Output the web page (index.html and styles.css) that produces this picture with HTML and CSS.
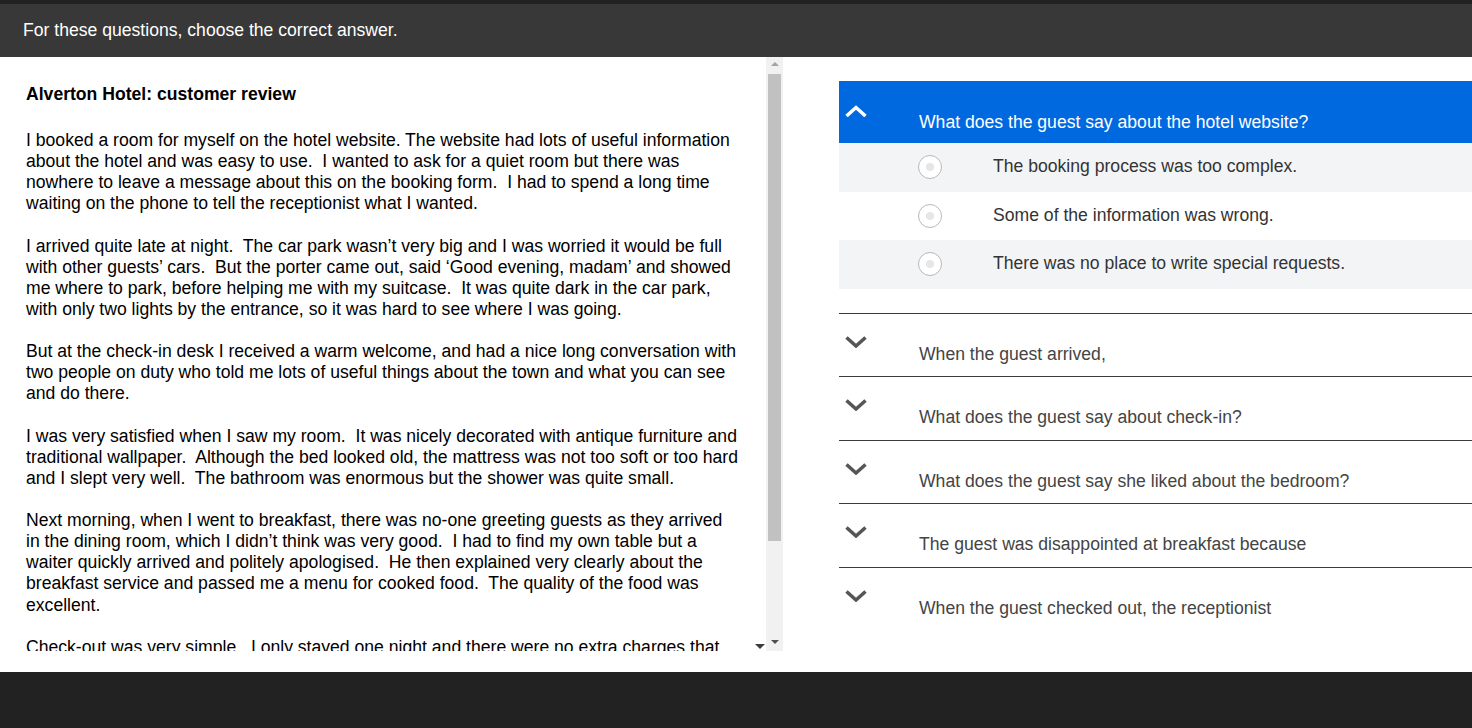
FILE: index.html
```html
<!DOCTYPE html>
<html lang="en">
<head>
    <meta charset="UTF-8">
    <meta name="viewport" content="width=device-width, initial-scale=1.0">
    <title>Reading - Alverton Hotel</title>
    <link rel="stylesheet" href="styles.css">
</head>
<body>
    <div class="topbar">For these questions, choose the correct answer.</div>

    <div class="main">
        <div class="reading">
            <div class="reading-text">
                <h1>Alverton Hotel: customer review</h1>
                <p>I booked a room for myself on the hotel website. The website had lots of useful information<br>
                about the hotel and was easy to use.&nbsp; I wanted to ask for a quiet room but there was<br>
                nowhere to leave a message about this on the booking form.&nbsp; I had to spend a long time<br>
                waiting on the phone to tell the receptionist what I wanted.</p>
                <p>I arrived quite late at night.&nbsp; The car park wasn’t very big and I was worried it would be full<br>
                with other guests’ cars.&nbsp; But the porter came out, said ‘Good evening, madam’ and showed<br>
                me where to park, before helping me with my suitcase.&nbsp; It was quite dark in the car park,<br>
                with only two lights by the entrance, so it was hard to see where I was going.</p>
                <p>But at the check-in desk I received a warm welcome, and had a nice long conversation with<br>
                two people on duty who told me lots of useful things about the town and what you can see<br>
                and do there.</p>
                <p>I was very satisfied when I saw my room.&nbsp; It was nicely decorated with antique furniture and<br>
                traditional wallpaper.&nbsp; Although the bed looked old, the mattress was not too soft or too hard<br>
                and I slept very well.&nbsp; The bathroom was enormous but the shower was quite small.</p>
                <p>Next morning, when I went to breakfast, there was no-one greeting guests as they arrived<br>
                in the dining room, which I didn’t think was very good.&nbsp; I had to find my own table but a<br>
                waiter quickly arrived and politely apologised.&nbsp; He then explained very clearly about the<br>
                breakfast service and passed me a menu for cooked food.&nbsp; The quality of the food was<br>
                excellent.</p>
                <p>Check-out was very simple.&nbsp; I only stayed one night and there were no extra charges that<br>
                I had to pay.</p>
            </div>
            <div class="scrollbar">
                <span class="arrow-up"></span>
                <span class="thumb"></span>
                <span class="arrow-down"></span>
            </div>
            <span class="more-caret"></span>
        </div>

        <div class="questions">
            <div class="question open">
                <div class="question-head">
                    <span class="chevron">
                        <svg width="22" height="12" viewBox="0 0 22 12"><polyline points="1.5,11 11,2.5 20.5,11" fill="none" stroke="#fff" stroke-width="3.5"/></svg>
                    </span>
                    <span class="question-title">What does the guest say about the hotel website?</span>
                </div>
                <label class="option"><span class="radio"></span>The booking process was too complex.</label>
                <label class="option"><span class="radio"></span>Some of the information was wrong.</label>
                <label class="option"><span class="radio"></span>There was no place to write special requests.</label>
            </div>

            <div class="question">
                <span class="chevron">
                    <svg width="22" height="12" viewBox="0 0 22 12"><polyline points="1.5,1.5 11,10 20.5,1.5" fill="none" stroke="#555" stroke-width="3.5"/></svg>
                </span>
                <span class="question-title">When the guest arrived,</span>
            </div>
            <div class="question">
                <span class="chevron">
                    <svg width="22" height="12" viewBox="0 0 22 12"><polyline points="1.5,1.5 11,10 20.5,1.5" fill="none" stroke="#555" stroke-width="3.5"/></svg>
                </span>
                <span class="question-title">What does the guest say about check-in?</span>
            </div>
            <div class="question">
                <span class="chevron">
                    <svg width="22" height="12" viewBox="0 0 22 12"><polyline points="1.5,1.5 11,10 20.5,1.5" fill="none" stroke="#555" stroke-width="3.5"/></svg>
                </span>
                <span class="question-title">What does the guest say she liked about the bedroom?</span>
            </div>
            <div class="question">
                <span class="chevron">
                    <svg width="22" height="12" viewBox="0 0 22 12"><polyline points="1.5,1.5 11,10 20.5,1.5" fill="none" stroke="#555" stroke-width="3.5"/></svg>
                </span>
                <span class="question-title">The guest was disappointed at breakfast because</span>
            </div>
            <div class="question">
                <span class="chevron">
                    <svg width="22" height="12" viewBox="0 0 22 12"><polyline points="1.5,1.5 11,10 20.5,1.5" fill="none" stroke="#555" stroke-width="3.5"/></svg>
                </span>
                <span class="question-title">When the guest checked out, the receptionist</span>
            </div>
        </div>
    </div>

    <div class="footer"></div>
</body>
</html>
```

FILE: styles.css
```css
body {
    margin: 0;
    font-family: "Liberation Sans", Arial, sans-serif;
    background-color: #fff;
    height: 728px;
    overflow: hidden;
}
.topbar {
    border-top: 4px solid #222;
    height: 53px;
    line-height: 53px;
    padding-left: 23px;
    background-color: #383838;
    color: #fff;
    font-size: 17.6px;
}
.main {
    display: flex;
    height: 615px;
}
.reading {
    position: relative;
    display: flex;
    width: 783px;
    height: 594px;
    flex-shrink: 0;
}
.reading-text {
    flex: 1;
    overflow: hidden;
    padding: 27px 0 0 26px;
    font-size: 17.6px;
    line-height: 1.2;
    color: #000;
    white-space: nowrap;
}
.reading-text h1 {
    font-size: 17.6px;
    line-height: 1.2;
    margin: 0 0 25px;
}
.reading-text p {
    margin: 0 0 1.2em;
}
.scrollbar {
    width: 17px;
    background-color: #f1f1f1;
    display: flex;
    flex-direction: column;
    align-items: center;
}
.arrow-up {
    margin-top: 5px;
    border-left: 4px solid transparent;
    border-right: 4px solid transparent;
    border-bottom: 4px solid #a3a3a3;
}
.thumb {
    width: 13px;
    height: 467px;
    margin-top: 8px;
    background-color: #c1c1c1;
}
.arrow-down {
    margin-top: auto;
    margin-bottom: 7px;
    border-left: 4px solid transparent;
    border-right: 4px solid transparent;
    border-top: 4px solid #505050;
}
.more-caret {
    position: absolute;
    left: 755px;
    bottom: 2px;
    border-left: 5px solid transparent;
    border-right: 5px solid transparent;
    border-top: 5px solid #3c3c3c;
}
.questions {
    flex: 1;
    margin: 24px 0 0 56px;
    font-size: 17.6px;
}
.question {
    display: flex;
    height: 62.5px;
    border-top: 1px solid #3a3a3a;
    color: #444;
}
.question.open {
    display: block;
    height: auto;
    border-top: none;
    margin-bottom: 24px;
}
.chevron {
    width: 80px;
    flex-shrink: 0;
    padding: 22px 0 0 6px;
    box-sizing: border-box;
}
.chevron svg {
    display: block;
}
.question-title {
    padding-top: 30px;
    line-height: 20px;
}
.question-head {
    display: flex;
    height: 62px;
    background-color: #0069e0;
    color: #fff;
}
.question-head .chevron {
    padding-top: 24px;
}
.question-head .question-title {
    padding-top: 31px;
}
.option {
    display: flex;
    align-items: center;
    height: 48.5px;
    padding-bottom: 1px;
    box-sizing: border-box;
    color: #333;
    cursor: pointer;
}
.option:nth-of-type(odd) {
    background-color: #f3f4f6;
}
.radio {
    width: 24px;
    height: 24px;
    box-sizing: border-box;
    margin: 1px 51px 0 79px;
    border: 1.5px solid #b8b8b8;
    border-radius: 50%;
    background-color: #fff;
    display: flex;
    align-items: center;
    justify-content: center;
}
.radio::after {
    content: "";
    width: 8px;
    height: 8px;
    border-radius: 50%;
    background-color: #e6e6e6;
}
.footer {
    height: 56px;
    background-color: #222;
}
```
